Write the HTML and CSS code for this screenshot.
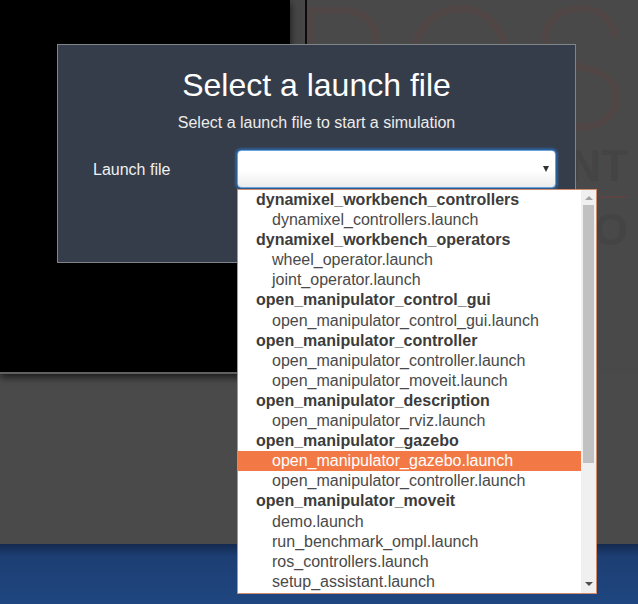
FILE: index.html
```html
<!DOCTYPE html>
<html lang="en">
<head>
    <meta charset="UTF-8">
    <meta name="viewport" content="width=device-width, initial-scale=1.0">
    <title>Select a launch file</title>
    <link rel="stylesheet" href="styles.css">
</head>
<body>
    <div class="screen">
        <!-- Fondo: visor 3D, logo y barra de tareas -->
        <div class="workspace">
            <div class="viewer"></div>
            <div class="splitter"></div>
            <div class="brand" aria-hidden="true">
                <div class="brand-name">ROS</div>
                <div class="brand-sub">NT</div>
                <div class="brand-rule"></div>
                <div class="brand-sub brand-last">O</div>
            </div>
        </div>
        <div class="floor"></div>
        <div class="taskbar"></div>

        <!-- Dialogo -->
        <div class="modal">
            <h1>Select a launch file</h1>
            <p class="subtitle">Select a launch file to start a simulation</p>
            <div class="field">
                <label for="launchFile">Launch file</label>
                <div class="select" id="launchFile">
                    <span class="caret"></span>
                </div>
            </div>
        </div>

        <!-- Lista desplegada del select -->
        <div class="dropdown">
            <div class="options">
                <div class="group">dynamixel_workbench_controllers</div>
                <div class="option">dynamixel_controllers.launch</div>
                <div class="group">dynamixel_workbench_operators</div>
                <div class="option">wheel_operator.launch</div>
                <div class="option">joint_operator.launch</div>
                <div class="group">open_manipulator_control_gui</div>
                <div class="option">open_manipulator_control_gui.launch</div>
                <div class="group">open_manipulator_controller</div>
                <div class="option">open_manipulator_controller.launch</div>
                <div class="option">open_manipulator_moveit.launch</div>
                <div class="group">open_manipulator_description</div>
                <div class="option">open_manipulator_rviz.launch</div>
                <div class="group">open_manipulator_gazebo</div>
                <div class="option selected">open_manipulator_gazebo.launch</div>
                <div class="option">open_manipulator_controller.launch</div>
                <div class="group">open_manipulator_moveit</div>
                <div class="option">demo.launch</div>
                <div class="option">run_benchmark_ompl.launch</div>
                <div class="option">ros_controllers.launch</div>
                <div class="option">setup_assistant.launch</div>
            </div>
            <div class="scrollbar">
                <div class="arrow-up"></div>
                <div class="thumb"></div>
                <div class="arrow-down"></div>
            </div>
        </div>
    </div>
</body>
</html>
```

FILE: styles.css
```css
body {
    margin: 0;
    padding: 0;
    font-family: "Liberation Sans", Arial, sans-serif;
    background-color: #4a4a4a;
    overflow: hidden;
}

.screen {
    position: relative;
    width: 638px;
    height: 604px;
    display: flex;
    flex-direction: column;
    overflow: hidden;
}

.workspace {
    height: 374px;
    display: flex;
    background-color: #4a4949;
}

.viewer {
    width: 290px;
    height: 374px;
    box-sizing: border-box;
    background-color: #000;
    border-bottom: 2px solid #606060;
    box-shadow: 0 3px 8px rgba(0, 0, 0, 0.7);
    position: relative;
    z-index: 1;
}

.splitter {
    width: 15px;
    background-color: #464646;
    border-right: 2px solid #0c0c0c;
}

.brand {
    flex: 1;
    overflow: hidden;
    display: flex;
    flex-direction: column;
    align-items: flex-end;
    padding-right: 10px;
}

.brand-name {
    font-family: Inter, "Liberation Sans", sans-serif;
    font-weight: 200;
    font-size: 168px;
    line-height: 140px;
    margin-top: -2px;
    margin-right: -8px;
    color: #504646;
    letter-spacing: 4px;
    white-space: nowrap;
}

.brand-sub {
    font-weight: bold;
    font-size: 44px;
    line-height: 40px;
    margin-top: 8px;
    color: #444;
}

.brand-rule {
    width: 28px;
    height: 2px;
    margin-top: 10px;
    background-color: #5a4444;
}

.brand-last {
    margin-top: 12px;
}

.floor {
    height: 170px;
    background-color: #4a4a4a;
}

.taskbar {
    height: 60px;
    background: linear-gradient(to bottom, #142a4f 0, #1c3e73 12px, #1f4680 100%);
}

/* Dialogo */

.modal {
    position: absolute;
    left: 57px;
    top: 44px;
    z-index: 2;
    width: 519px;
    height: 219px;
    box-sizing: border-box;
    background-color: #363d4a;
    border: 1px solid #80858c;
    padding-top: 22px;
    text-align: center;
    color: #fff;
}

.modal h1 {
    margin: 0;
    font-size: 32px;
    font-weight: normal;
    line-height: 36px;
}

.subtitle {
    margin: 10px 0 0;
    font-size: 16px;
    line-height: 20px;
    color: #ececec;
}

.field {
    display: flex;
    align-items: center;
    margin-top: 17px;
    padding-left: 35px;
    text-align: left;
}

.field label {
    width: 144px;
    font-size: 16px;
    line-height: 20px;
    padding-top: 2px;
    color: #f0f0f0;
}

.select {
    width: 319px;
    height: 38px;
    box-sizing: border-box;
    border: 1px solid #6aa3dc;
    border-radius: 4px;
    box-shadow: 0 0 2px 2px #2d5e96;
    background: linear-gradient(to bottom, #fff 0, #fff 55%, #ececec 100%);
    display: flex;
    align-items: center;
    justify-content: flex-end;
    padding-right: 6px;
}

.caret {
    width: 0;
    height: 0;
    border-left: 3px solid transparent;
    border-right: 3px solid transparent;
    border-top: 6px solid #333;
}

/* Lista desplegada */

.dropdown {
    position: absolute;
    left: 237px;
    top: 189px;
    width: 360px;
    height: 405px;
    box-sizing: border-box;
    border: 1px solid #d08a6c;
    background-color: #fff;
    display: flex;
    z-index: 3;
}

.options {
    flex: 1;
    overflow: hidden;
    font-size: 16px;
}

.group,
.option {
    height: 20.1px;
    line-height: 20.1px;
    white-space: nowrap;
}

.group {
    padding-left: 18px;
    font-weight: bold;
    color: #3c3c3c;
}

.option {
    padding-left: 34px;
    color: #4a4a4a;
}

.option.selected {
    background-color: #f27946;
    color: #fff;
}

.scrollbar {
    width: 15px;
    background-color: #f0f0f0;
    display: flex;
    flex-direction: column;
    align-items: center;
}

.arrow-up {
    width: 0;
    height: 0;
    margin-top: 6px;
    border-left: 4px solid transparent;
    border-right: 4px solid transparent;
    border-bottom: 4px solid #a3a3a3;
}

.thumb {
    width: 11px;
    height: 258px;
    margin-top: 5px;
    background-color: #c1c1c1;
}

.arrow-down {
    width: 0;
    height: 0;
    margin-top: auto;
    margin-bottom: 7px;
    border-left: 4px solid transparent;
    border-right: 4px solid transparent;
    border-top: 4px solid #505050;
}
```
